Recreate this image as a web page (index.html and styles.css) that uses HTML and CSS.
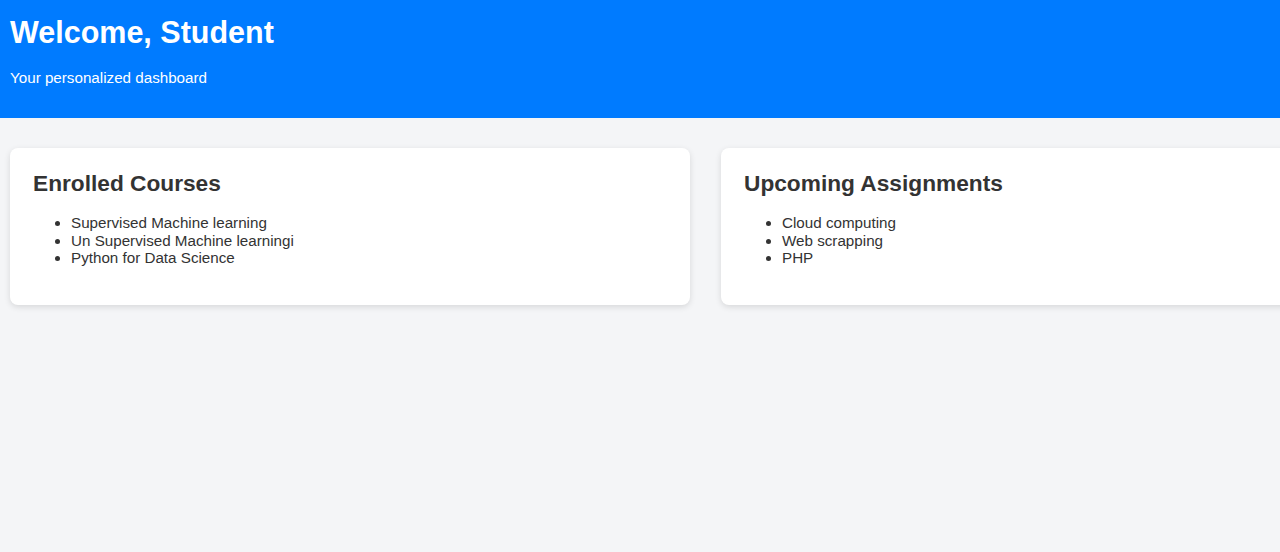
FILE: index.html
```html
<!DOCTYPE html>
<html>
<head>
<meta charset="utf-8">
<title>Student Dashboard</title>
<link rel="stylesheet" href="styles.css">
</head>
<body>
<header class="header">
  <h1 class="title">Welcome, Student</h1>
  <p class="subtitle">Your personalized dashboard</p>
</header>
<main class="cards">
  <section class="card">
    <h2 class="card-title">Enrolled Courses</h2>
    <ul class="card-list">
      <li>Supervised Machine learning</li>
      <li>Un Supervised Machine learningi</li>
      <li>Python for Data Science</li>
    </ul>
  </section>
  <section class="card">
    <h2 class="card-title">Upcoming Assignments</h2>
    <ul class="card-list">
      <li>Cloud computing</li>
      <li>Web scrapping</li>
      <li>PHP</li>
    </ul>
  </section>
</main>
</body>
</html>
```
FILE: styles.css
```css
html, body {
  margin: 0;
  padding: 0;
}
body {
  background: #f4f5f7;
  font-family: "Liberation Sans", Arial, sans-serif;
  color: #333;
  overflow: hidden;
}
.header {
  background: #007bff;
  color: #fff;
  height: 118px;
  box-sizing: border-box;
  padding: 14px 10px 0;
}
.title {
  margin: 0;
  font-size: 30.5px;
  font-weight: bold;
  line-height: 36px;
}
.subtitle {
  margin: 18px 0 0;
  font-size: 15.2px;
  line-height: 20px;
}
.cards {
  display: flex;
  gap: 31px;
  padding: 30px 10px;
}
.card {
  flex: 0 0 680px;
  box-sizing: border-box;
  height: 157px;
  background: #fff;
  border-radius: 8px;
  box-shadow: 0 2px 6px rgba(0, 0, 0, 0.12);
  padding: 21px 23px;
}
.card-title {
  margin: 0;
  font-size: 22.7px;
  line-height: 28px;
  font-weight: bold;
}
.card-list {
  margin: 17px 0 0;
  padding-left: 38px;
  font-size: 15.2px;
  line-height: 17.5px;
}
```
